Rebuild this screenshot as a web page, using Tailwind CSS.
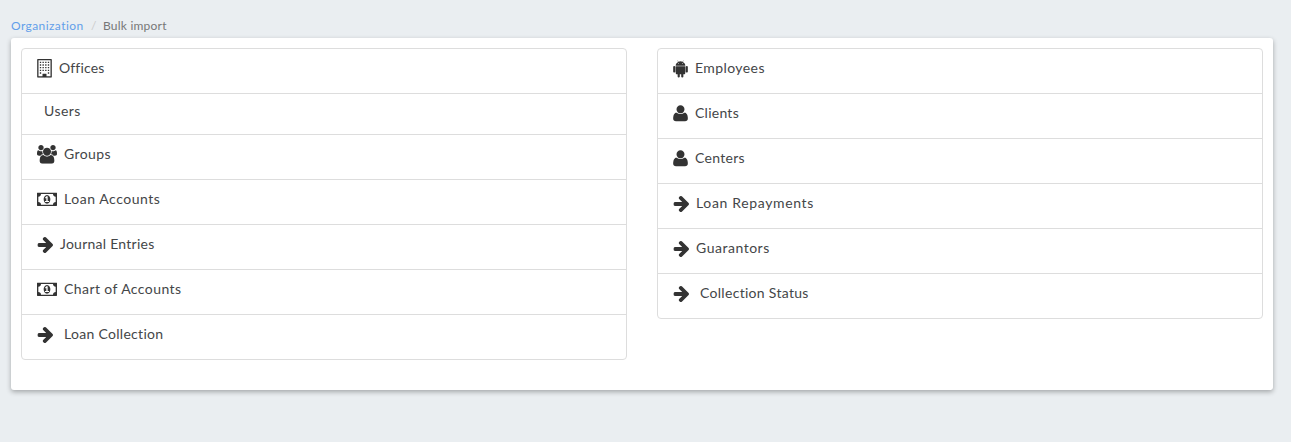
<!DOCTYPE html>
<html lang="en"><head><meta charset="utf-8"><title>Bulk import</title>
<script src="https://cdn.jsdelivr.net/npm/@tailwindcss/browser@4"></script></head>
<body class="bg-[#eaeef1] min-h-screen pt-[17px] pl-[11px] pr-[18px] text-sm text-[#444648] font-['Lato','Nunito_Sans',sans-serif]">
<svg class="hidden">
<symbol id="building" viewBox="0 0 1408 1792"><path fill-rule="evenodd" d="M64 0H1344Q1408 0 1408 64V1728Q1408 1792 1344 1792H64Q0 1792 0 1728V64Q0 0 64 0ZM128 128V1664H512V1440Q512 1408 544 1408H864Q896 1408 896 1440V1664H1280V128Z"/><path d="M256 256h128v128h-128zM512 256h128v128h-128zM768 256h128v128h-128zM1024 256h128v128h-128zM256 512h128v128h-128zM512 512h128v128h-128zM768 512h128v128h-128zM1024 512h128v128h-128zM256 768h128v128h-128zM512 768h128v128h-128zM768 768h128v128h-128zM1024 768h128v128h-128zM256 1024h128v128h-128zM512 1024h128v128h-128zM768 1024h128v128h-128zM1024 1024h128v128h-128zM256 1280h128v128h-128zM1024 1280h128v128h-128z"/></symbol>
<symbol id="group" viewBox="0 0 1920 1792"><path transform="matrix(1 0 0 -1 0 1536)" d="M593 640q-162-5-265-128h-134q-82 0-138 40.5t-56 118.5q0 353 124 353q6 0 43.5-21t97.5-42.5t119-21.5q67 0 133 23q-5-37-5-66q0-139 81-256zM1664 3q0-120-73-189.5t-194-69.5h-874q-121 0-194 69.5t-73 189.5q0 53 3.5 103.5t14 109t26.5 108.5t43 97.5t62 81t85.5 53.5t111.5 20q10 0 43-21.5t73-48t107-48t135-21.5t135 21.5t107 48t73 48t43 21.5q61 0 111.5-20t85.5-53.5t62-81t43-97.5t26.5-108.5t14-109t3.5-103.5zM640 1280q0-106-75-181t-181-75t-181 75t-75 181t75 181t181 75t181-75t75-181zM1344 896q0-159-112.5-271.5t-271.5-112.5t-271.5 112.5t-112.5 271.5t112.5 271.5t271.5 112.5t271.5-112.5t112.5-271.5zM1920 671q0-78-56-118.5t-138-40.5h-134q-103 123-265 128q81 117 81 256q0 29-5 66q66-23 133-23q59 0 119 21.5t97.5 42.5t43.5 21q124 0 124-353zM1792 1280q0-106-75-181t-181-75t-181 75t-75 181t75 181t181 75t181-75t75-181z"/></symbol>
<symbol id="money" viewBox="0 0 1920 1792"><path transform="matrix(1 0 0 -1 0 1536)" d="M768 384h384v96h-128v448h-114l-148-137l77-80q42 37 55 57h2v-288h-128v-96zM1280 640q0-70-21-142t-59.5-134t-101.5-101t-138-39t-138 39t-101.5 101t-59.5 134t-21 142t21 142t59.5 134t101.5 101t138 39t138-39t101.5-101t59.5-134t21-142zM1792 384v512q-106 0-181 75t-75 181h-1152q0-106-75-181t-181-75v-512q106 0 181-75t75-181h1152q0 106 75 181t181 75zM1920 1216v-1152q0-26-19-45t-45-19h-1792q-26 0-45 19t-19 45v1152q0 26 19 45t45 19h1792q26 0 45-19t19-45z"/></symbol>
<symbol id="arrow" viewBox="128 0 1536 1792"><path d="M1664 960q0 54-37 91l-651 651q-39 37-91 37-51 0-90-37l-75-75q-38-38-38-91t38-91l293-293h-704q-52 0-84.500-37.500t-32.500-90.500v-128q0-53 32.500-90.500t84.500-37.500h704l-293-294q-38-36-38-90t38-90l75-75q38-38 90-38 53 0 91 38l651 651q37 35 37 90z"/></symbol>
<symbol id="user" viewBox="0 0 1408 1792"><path transform="matrix(1 0 0 -1 0 1536)" d="M1408 131q0-120-73-189.5t-194-69.5h-874q-121 0-194 69.5t-73 189.5q0 53 3.5 103.5t14 109t26.5 108.500t43 97.5t62 81t85.500 53.5t111.500 20q9 0 42-21.5t74.500-48t108-48t133.500-21.5t133.500 21.5t108 48t74.500 48t42 21.5q61 0 111.5-20t85.500-53.5t62-81t43-97.5t26.500-108.5t14-109t3.500-103.5zM1088 1024q0-159-112.5-271.5t-271.5-112.5t-271.5 112.5t-112.5 271.5t112.5 271.5t271.5 112.5t271.5-112.5t112.5-271.5z"/></symbol>
<symbol id="android" viewBox="0 0 1408 1792"><path transform="matrix(1 0 0 -1 0 1536)" fill-rule="evenodd" d="M103 869q42 0 72-30t30-72v-430q0-43-29.5-73t-72.5-30t-73 30t-30 73v430q0 42 30 72t73 30zM1163 850v-666q0-46-32-78t-77-32h-75v-227q0-43-30-73t-73-30t-73 30t-30 73v227h-138v-227q0-43-30-73t-73-30q-42 0-72 30t-30 73l-1 227h-74q-46 0-78 32t-32 78v666h918zM931 1255q107-55 171-153.5t64-215.5h-925q0 117 64 215.5t172 153.5l-71 131q-7 13 5 20q13 6 20-6l72-132q95 42 201 42t201-42l72 132q7 12 20 6q12-7 5-20zM493 1053q16 0 27.5 11.5t11.5 27.5t-11.5 27.5t-27.5 11.5t-27-11.5t-11-27.5t11-27.5t27-11.5zM915 1053q16 0 27 11.5t11 27.500t-11 27.5t-27 11.5t-27.500-11.5t-11.500-27.5t11.500-27.5t27.500-11.5zM1408 767v-430q0-43-30-73t-73-30q-42 0-72 30t-30 73v430q0 43 30 72.500t72 29.500q43 0 73-29.500t30-72.500z"/></symbol>
</svg>
<nav class="flex h-[21px] items-start text-xs leading-[18px] whitespace-nowrap"><a class="w-[80px] text-[#629eea] tracking-[0.42px]">Organization</a><span class="w-3 text-[#ccc]">/</span><span class="text-[#777] tracking-[0.22px]">Bulk import</span></nav>
<main class="flex h-[352px] items-start gap-[30px] rounded-[3px] bg-white p-[10px] shadow-[0_2px_5px_rgba(0,0,0,0.3)]">
<ul class="flex-1 rounded border border-[#ddd] divide-y divide-[#ddd] fill-[#333] [&>li]:flex [&>li]:h-[45px] [&>li:last-child]:h-[44px] [&>li]:items-start [&>li]:pt-[10px] [&>li]:pl-[15px] [&_svg]:h-[18.67px] [&_svg]:shrink-0 [&_span]:leading-[18px] [&_span]:whitespace-nowrap">
<li><svg class="w-[22px] pr-[7px]"><use href="#building"/></svg><span class="tracking-[0.15px]">Offices</span></li>
<li class="h-[41px]!"><span class="ml-[7px] -mt-[2px] tracking-[0.45px]">Users</span></li>
<li><svg class="w-[27px] pr-[7px]"><use href="#group"/></svg><span class="tracking-[0.42px]">Groups</span></li>
<li><svg class="w-[27px] pr-[7px]"><use href="#money"/></svg><span class="tracking-[0.54px]">Loan Accounts</span></li>
<li><svg class="w-[23px] pr-[7px]"><use href="#arrow"/></svg><span class="tracking-[0.25px]">Journal Entries</span></li>
<li><svg class="w-[27px] pr-[7px]"><use href="#money"/></svg><span class="tracking-[0.42px]">Chart of Accounts</span></li>
<li><svg class="w-[27px] pr-[11px]"><use href="#arrow"/></svg><span class="tracking-[0.3px]">Loan Collection</span></li>
</ul>
<ul class="flex-1 rounded border border-[#ddd] divide-y divide-[#ddd] fill-[#333] [&>li]:flex [&>li]:h-[45px] [&>li:last-child]:h-[44px] [&>li]:items-start [&>li]:pt-[10px] [&>li]:pl-[15px] [&_svg]:h-[18.67px] [&_svg]:shrink-0 [&_span]:leading-[18px] [&_span]:whitespace-nowrap">
<li><svg class="w-[22px] pr-[7px]"><use href="#android"/></svg><span class="tracking-[0.42px]">Employees</span></li>
<li><svg class="w-[22px] pr-[7px]"><use href="#user"/></svg><span class="tracking-[0.25px]">Clients</span></li>
<li><svg class="w-[22px] pr-[7px]"><use href="#user"/></svg><span class="tracking-[0.3px]">Centers</span></li>
<li><svg class="w-[23px] pr-[7px]"><use href="#arrow"/></svg><span class="tracking-[0.65px]">Loan Repayments</span></li>
<li><svg class="w-[23px] pr-[7px]"><use href="#arrow"/></svg><span class="tracking-[0.52px]">Guarantors</span></li>
<li><svg class="w-[27px] pr-[11px]"><use href="#arrow"/></svg><span class="tracking-[0.3px]">Collection Status</span></li>
</ul>
</main>
</body></html>
